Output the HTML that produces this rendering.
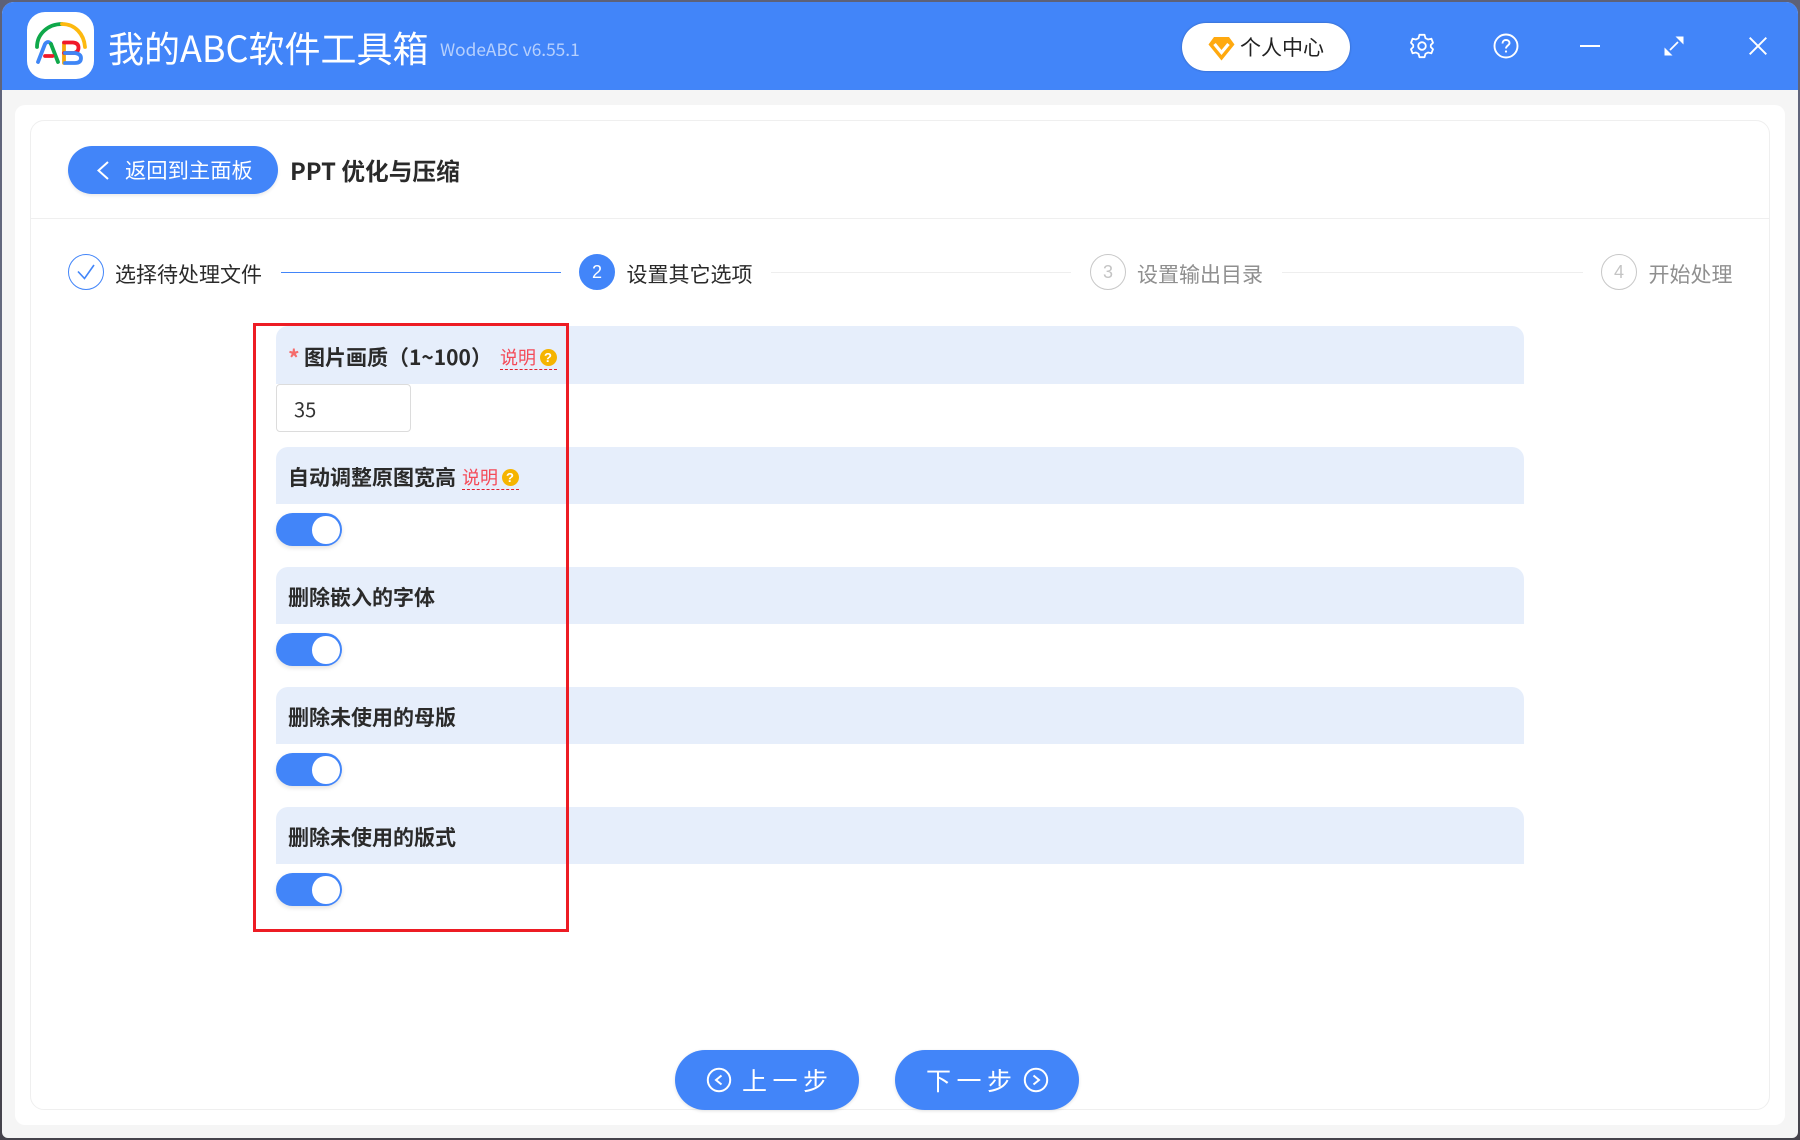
<!DOCTYPE html>
<html lang="zh-CN">
<head>
<meta charset="utf-8">
<title>我的ABC软件工具箱</title>
<style>
*{box-sizing:border-box;margin:0;padding:0}
html,body{width:1800px;height:1140px;overflow:hidden}
body{position:relative;background:linear-gradient(180deg,#5d6178 0%,#6a7084 45%,#4b4a55 75%,#45434c 100%);font-family:"Liberation Sans","Noto Sans CJK SC",sans-serif;color:#2a2a2a}
.a{position:absolute;white-space:nowrap}
.cjk{font-family:"Noto Sans CJK SC","Liberation Sans",sans-serif}
#win{left:2px;top:2px;width:1796px;height:1136px;background:#f5f5f5;border-radius:12px 12px 6px 6px;overflow:hidden}
#hdr{left:2px;top:2px;width:1796px;height:88px;background:#4285f9;border-radius:12px 12px 0 0}
#panel{left:15px;top:105px;width:1770px;height:1020px;background:#fff;border-radius:10px}
#card{left:30px;top:120px;width:1740px;height:990px;background:#fff;border:1px solid #efefef;border-radius:14px}
#div{left:31px;top:218px;width:1738px;height:1px;background:#efefef}
.step{font-size:21px;line-height:30px;top:259px}
.circ{top:254px;width:36px;height:36px;border-radius:50%;text-align:center;line-height:34px;font-size:18px;border:1.5px solid #c8c8c8;color:#c4c4c4}
.ln{height:1px;top:272px;background:#eeeeee}
.bar{left:276px;width:1248px;background:#e6eefb;border-radius:12px 12px 0 0}
.lab{font-size:21px;font-weight:700;line-height:30px;color:#2a2a2a}
.tip{font-size:18px;line-height:24px;color:#f44a58}
.dash{height:0;border-top:1.5px dashed #e0202c}
.q{width:17px;height:17px;border-radius:50%;background:#f5b400;color:#fff;font-size:13px;font-weight:700;line-height:17px;text-align:center}
.tg{left:276px;width:66px;height:33px;border-radius:17px;background:#4285f9;box-shadow:0 2px 5px rgba(0,0,0,.12)}
.tg i{position:absolute;left:36px;top:3px;width:27.5px;height:27.5px;border-radius:50%;background:#fff;display:block}
.btn{top:1050px;width:184px;height:60px;border-radius:30px;background:#4285f9;box-shadow:0 1px 3px rgba(0,0,0,.12)}
.bt{color:#fff;font-size:25px;line-height:34px;letter-spacing:5.5px;top:1063px}
</style>
</head>
<body>
<div class="a" id="win"></div>
<div class="a" id="hdr"></div>

<svg class="a" style="left:27px;top:12px" width="67" height="67" viewBox="27 12 67 67">
  <rect x="27" y="12" width="67" height="67" rx="18" fill="#fff"/>
  <path d="M37 47C37 34 48 24 62 24" fill="none" stroke="#0fa84a" stroke-width="3.8" stroke-linecap="round"/>
  <path d="M62 24C75 24 84 34 85 47" fill="none" stroke="#fdb90f" stroke-width="3.8" stroke-linecap="round"/>
  <path d="M38 62L45 44Q48 40 51 44" fill="none" stroke="#3f86f6" stroke-width="3.8" stroke-linecap="round" stroke-linejoin="round"/>
  <path d="M51 44L58 62" fill="none" stroke="#0fa84a" stroke-width="3.8" stroke-linecap="round"/>
  <path d="M45 56H52.500" fill="none" stroke="#f0192a" stroke-width="3.8" stroke-linecap="round"/>
  <path d="M64 43V63" fill="none" stroke="#f5a70d" stroke-width="3.8" stroke-linecap="round"/>
  <path d="M64 42.500H73Q78.500 43 78.500 47.500Q78.500 52 74 53H64" fill="none" stroke="#f0192a" stroke-width="3.8" stroke-linecap="round"/>
  <path d="M65 53H75Q81 54 81 58Q81 63 75 63H65" fill="none" stroke="#3f86f6" stroke-width="3.8" stroke-linecap="round"/>
</svg>

<div class="a cjk" style="left:108px;top:22px;font-size:36px;line-height:50px;color:#fff;font-weight:400">我的ABC软件工具箱</div>
<div class="a cjk" style="left:440px;top:36px;font-size:17.3px;line-height:26px;color:rgba(255,255,255,.62)">WodeABC v6.55.1</div>

<div class="a" style="left:1182px;top:23px;width:168px;height:48px;border-radius:24px;background:#fff;box-shadow:0 0 2px rgba(0,0,0,.3)"></div>
<svg class="a" style="left:1208px;top:36px" width="27" height="25" viewBox="0 0 27 25">
  <path d="M6 1H21L26.500 8.500L13.500 24.500L.5 8.500Z" fill="#ffa90f"/>
  <path d="M6.500 8L13.500 16.500L20.500 8" fill="none" stroke="#fff" stroke-width="3.200"/>
</svg>
<div class="a cjk" style="left:1240px;top:32px;font-size:21px;line-height:30px;color:#222">个人中心</div>

<svg class="a" style="left:1410px;top:33px" width="24" height="26" viewBox="0 0 24 26" fill="none" stroke="#fff" stroke-width="1.800" stroke-linejoin="round">
  <path d="M9.500 1.800H14.500L15.500 5.200L18 6.500L21.400 5.700L23 9.800L20.800 12V14L23 16.200L21.400 20.300L18 19.500L15.500 20.800L14.500 24.200H9.500L8.500 20.800L6 19.500L2.600 20.300L1 16.200L3.200 14V12L1 9.800L2.600 5.700L6 6.500L8.500 5.200Z"/>
  <circle cx="12" cy="13" r="3.800"/>
</svg>
<svg class="a" style="left:1493px;top:33px" width="26" height="26" viewBox="0 0 26 26" fill="none" stroke="#fff" stroke-width="1.900">
  <circle cx="13" cy="13" r="11.500"/>
  <path d="M9.500 10.500C9.500 8.200 11 7 13 7C15 7 16.500 8.300 16.500 10C16.500 12.500 13 12.500 13 15.500"/>
  <circle cx="13" cy="18.500" r="1.100" fill="#fff" stroke="none"/>
</svg>
<div class="a" style="left:1580px;top:45px;width:20px;height:2px;background:#fff"></div>
<svg class="a" style="left:1664px;top:36px" width="20" height="20" viewBox="0 0 20 20" fill="none" stroke="#fff" stroke-width="1.800">
  <path d="M6 14L14 6"/><path d="M11.500 .5H19.500V8.500Z" fill="#fff" stroke="none"/><path d="M.5 11.500V19.500H8.500Z" fill="#fff" stroke="none"/>
</svg>
<svg class="a" style="left:1749px;top:37px" width="18" height="18" viewBox="0 0 18 18" fill="none" stroke="#fff" stroke-width="1.900"><path d="M.7 .7L17.300 17.300M17.300 .7L.7 17.300"/></svg>

<div class="a" id="panel"></div>
<div class="a" id="card"></div>

<div class="a" style="left:68px;top:146px;width:210px;height:48px;border-radius:24px;background:#4285f9;box-shadow:0 2px 3px rgba(0,0,0,.08)"></div>
<svg class="a" style="left:95px;top:160px" width="16" height="21" viewBox="0 0 16 21" fill="none" stroke="#fff" stroke-width="2"><path d="M13 2L3.500 10.500L13 19"/></svg>
<div class="a cjk" style="left:125px;top:154px;font-size:21.3px;line-height:32px;color:#fff">返回到主面板</div>
<div class="a cjk" style="left:290px;top:153px;font-size:23.7px;line-height:34px;font-weight:700;color:#2a2a2a">PPT 优化与压缩</div>
<div class="a" id="div"></div>

<div class="a circ" style="left:68px;border-color:#4285f9"></div>
<svg class="a" style="left:76px;top:263px" width="20" height="18" viewBox="0 0 20 18" fill="none" stroke="#4285f9" stroke-width="1.600"><path d="M2 8.500L8.500 15.500L18 2"/></svg>
<div class="a step cjk" style="left:115px">选择待处理文件</div>
<div class="a ln" style="left:281px;width:280px;background:#4285f9"></div>

<div class="a circ" style="left:579px;background:#4285f9;border-color:#4285f9;color:#fff">2</div>
<div class="a step cjk" style="left:626.500px">设置其它选项</div>
<div class="a ln" style="left:771px;width:300px"></div>

<div class="a circ" style="left:1090px">3</div>
<div class="a step cjk" style="left:1137px;color:#8f8f8f">设置输出目录</div>
<div class="a ln" style="left:1282px;width:301px"></div>

<div class="a circ" style="left:1601px">4</div>
<div class="a step cjk" style="left:1648.500px;color:#8f8f8f">开始处理</div>

<div class="a bar" style="top:326px;height:58px"></div>
<div class="a bar" style="top:447px;height:57px"></div>
<div class="a bar" style="top:567px;height:57px"></div>
<div class="a bar" style="top:687px;height:57px"></div>
<div class="a bar" style="top:807px;height:57px"></div>

<div class="a cjk" style="left:288px;top:342px;font-size:23px;line-height:30px;color:#f56c6c;font-weight:700">*</div>
<div class="a lab cjk" style="left:304px;top:342px">图片画质（1~100）</div>
<div class="a tip cjk" style="left:500px;top:345px">说明</div>
<div class="a q" style="left:539.500px;top:348.500px">?</div>
<div class="a dash" style="left:500px;top:369px;width:57px"></div>

<div class="a" style="left:276px;top:384px;width:135px;height:48px;background:#fff;border:1.500px solid #dcdcdc;border-radius:4px"></div>
<div class="a cjk" style="left:294px;top:394px;font-size:20px;line-height:30px;color:#333">35</div>

<div class="a lab cjk" style="left:288px;top:462px">自动调整原图宽高</div>
<div class="a tip cjk" style="left:462px;top:465px">说明</div>
<div class="a q" style="left:501.500px;top:468.500px">?</div>
<div class="a dash" style="left:462px;top:489px;width:57px"></div>
<div class="a tg" style="top:513px"><i></i></div>

<div class="a lab cjk" style="left:288px;top:582px">删除嵌入的字体</div>
<div class="a tg" style="top:633px"><i></i></div>

<div class="a lab cjk" style="left:288px;top:702px">删除未使用的母版</div>
<div class="a tg" style="top:753px"><i></i></div>

<div class="a lab cjk" style="left:288px;top:822px">删除未使用的版式</div>
<div class="a tg" style="top:873px"><i></i></div>

<div class="a" style="left:253px;top:323px;width:316px;height:609px;border:3px solid #ed1c24"></div>

<div class="a btn" style="left:675px"></div>
<svg class="a" style="left:706px;top:1067px" width="26" height="26" viewBox="0 0 26 26" fill="none" stroke="#fff" stroke-width="2"><circle cx="13" cy="13" r="11.200"/><path d="M15.500 8.500L10 13L15.500 17.500"/></svg>
<div class="a bt cjk" style="left:742px">上一步</div>

<div class="a btn" style="left:895px"></div>
<div class="a bt cjk" style="left:926px">下一步</div>
<svg class="a" style="left:1023px;top:1067px" width="26" height="26" viewBox="0 0 26 26" fill="none" stroke="#fff" stroke-width="2"><circle cx="13" cy="13" r="11.200"/><path d="M10.500 8.500L16 13L10.500 17.500"/></svg>
</body>
</html>
